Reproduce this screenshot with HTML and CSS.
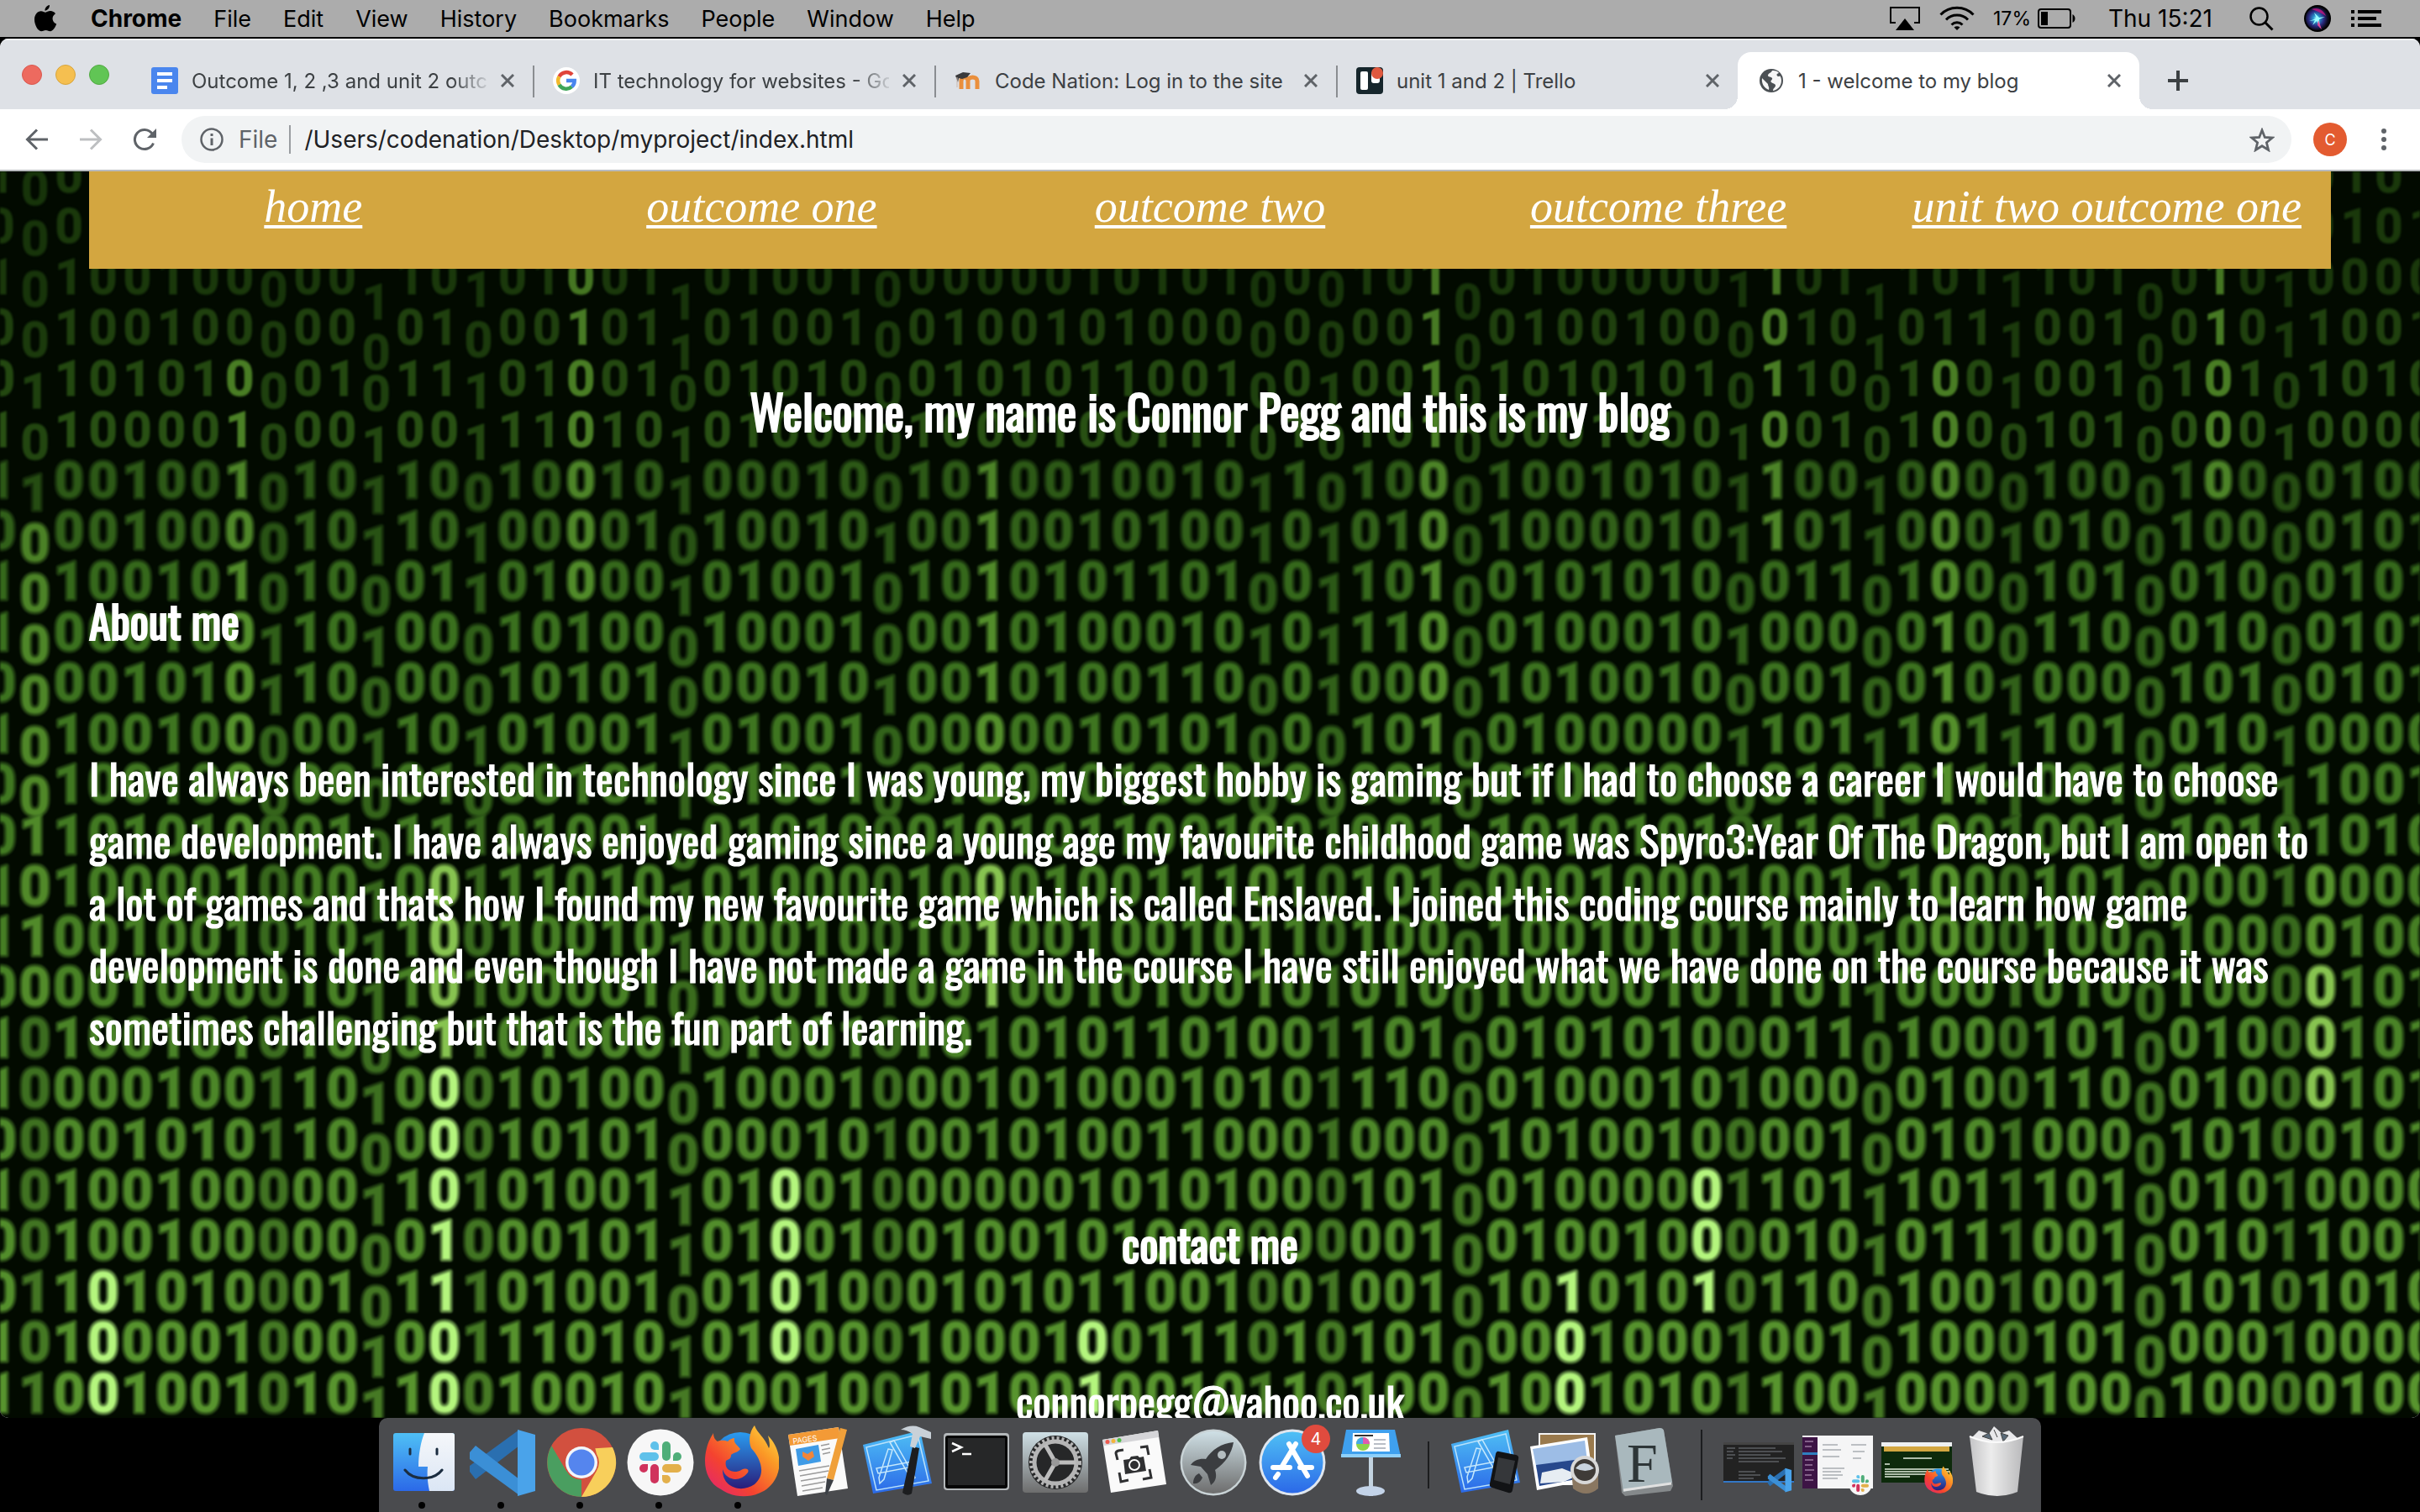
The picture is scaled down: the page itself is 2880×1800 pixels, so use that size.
FILE: index.html
```html
<!DOCTYPE html>
<html lang="en">
<head>
<meta charset="utf-8">
<meta name="viewport" content="width=device-width, initial-scale=1">
<title>1 - welcome to my blog</title>
<link rel="stylesheet" href="styles.css">
</head>
<body>
<header class="menubar">
  <nav class="menus" aria-label="Application menus">
    <button class="menu apple" aria-label="Apple menu"><svg width="28" height="34" viewBox="0 0 28 34"><path d="M19 1c.3 3-2.200 6.500-5.500 6.700C13 4.800 16 1.300 19 1zM14.200 9.700c1.400 0 3.200-1.700 5.800-1.600 2.500.1 4.700 1.200 6 3.200-5.200 3.300-4.200 10.200 1.200 12.300-1.300 3.900-4.300 8.600-7.300 8.600-2 0-2.900-1.300-5.400-1.300s-3.600 1.300-5.400 1.300C5 32.200 1 24.500 1 18.300 1 12 4.800 8.300 8.800 8.200c2.200 0 4 1.500 5.400 1.500z"/></svg></button>
    <button class="menu app">Chrome</button>
    <button class="menu">File</button>
    <button class="menu">Edit</button>
    <button class="menu">View</button>
    <button class="menu">History</button>
    <button class="menu">Bookmarks</button>
    <button class="menu">People</button>
    <button class="menu">Window</button>
    <button class="menu">Help</button>
  </nav>
  <div class="status">
    <svg class="airplay" width="38" height="30" viewBox="0 0 38 30"><path d="M8 20H2V2h34v18h-6" fill="none" stroke="#000" stroke-width="2"/><path d="M19 15l11 14H8z"/></svg>
    <svg class="wifi" width="42" height="30" viewBox="0 0 42 30" fill="none" stroke="#000" stroke-width="3"><path d="M1.500 10.500C12-.5 30-.5 40.500 10.500"/><path d="M8 16.500c7-7.300 19-7.300 26 0"/><path d="M14.500 22.500c3.800-3.600 9.200-3.600 13 0"/><path d="M17.500 25.500c2-1.700 5-1.700 7 0L21 29z" fill="#000" stroke="none"/></svg>
    <span class="percent">17%</span>
    <svg class="battery" width="46" height="24" viewBox="0 0 46 24"><rect x="1" y="1" width="38" height="22" rx="3" fill="none" stroke="#000" stroke-width="2"/><rect x="4" y="4" width="8" height="16"/><path d="M41.500 7c4 2 4 8 0 10z"/></svg>
    <time class="clock">Thu 15:21</time>
    <svg class="search" width="29" height="29" viewBox="0 0 29 29" fill="none" stroke="#000"><circle cx="11.500" cy="11.500" r="10" stroke-width="2.500"/><path d="M18.500 18.500L27.500 27.500" stroke-width="3"/></svg>
    <svg class="siri" width="32" height="32" viewBox="0 0 32 32"><defs><radialGradient id="siri" cx=".45" cy=".5"><stop offset="0" stop-color="#bff"/><stop offset=".25" stop-color="#2a9ad0"/><stop offset=".65" stop-color="#2a2a80"/><stop offset="1" stop-color="#0a0a18"/></radialGradient></defs><circle cx="16" cy="16" r="16"/><circle cx="16" cy="16" r="14" fill="url(#siri)"/><path d="M9 5c8-3 14 1 17 8-4-3-9-5-17-8z" fill="#c4177e" opacity=".8"/><path d="M6 19l9-3-3-7 6 6 7-1-7 3 1 10-4-8-5 5 3-6z" fill="#9ff"/><path d="M17 18l4 11-5-5z" fill="#e04a9a"/></svg>
    <svg class="list" width="36" height="20" viewBox="0 0 36 20"><path d="M0 0h4v4H0zM8 0h28v4H8zM0 8h4v4H0zM8 8h22v4H8zM0 16h4v4H0zM8 16h28v4H8z"/></svg>
  </div>
</header>

<div class="browser">
  <div class="tabstrip">
    <div class="lights"><button class="light red" aria-label="Close window"></button><button class="light amber" aria-label="Minimise window"></button><button class="light green" aria-label="Zoom window"></button></div>
    <div class="tab">
      <svg width="32" height="32" viewBox="0 0 32 32"><rect width="32" height="32" rx="3" fill="#4a86ee"/><path d="M7 6h18v4H7zM7 14h18v4H7zM7 22h12v4H7z" fill="#fff"/></svg>
      <button class="title faded">Outcome 1, 2 ,3 and unit 2 outcome</button>
      <button class="close" aria-label="Close tab"><svg width="16" height="16" viewBox="0 0 16 16"><path d="M1 1l14 14M15 1L1 15"/></svg></button>
    </div>
    <div class="tab">
      <svg width="32" height="32" viewBox="0 0 32 32"><circle cx="16" cy="16" r="16" fill="#fff"/><g fill="none" stroke-width="4.500"><path d="M7.500 11.200A9.700 9.700 0 0 1 23 9" stroke="#e0443a"/><path d="M7.500 20.800a9.700 9.700 0 0 1 0-9.600" stroke="#f2b92c"/><path d="M22.500 23.200a9.700 9.700 0 0 1-15-2.400" stroke="#3fa558"/><path d="M16 16h9.700c0 3.200-1.200 5.600-3.200 7.200" stroke="#4a86ee"/></g></svg>
      <button class="title faded">IT technology for websites - Google</button>
      <button class="close" aria-label="Close tab"><svg width="16" height="16" viewBox="0 0 16 16"><path d="M1 1l14 14M15 1L1 15"/></svg></button>
    </div>
    <div class="tab">
      <svg width="32" height="32" viewBox="0 0 32 32"><path d="M8 26V16.500c0-6 8-6 8 0V26m0-9.500c0-6 11-6 11 0V26" fill="none" stroke="#ea8f3c" stroke-width="5"/><path d="M1 10l9-4 9 1-4 5-6 2-4-1-1 5z" fill="#3a3a3c"/><path d="M3 12v12" stroke="#c9b7ad" stroke-width="1"/></svg>
      <button class="title">Code Nation: Log in to the site</button>
      <button class="close" aria-label="Close tab"><svg width="16" height="16" viewBox="0 0 16 16"><path d="M1 1l14 14M15 1L1 15"/></svg></button>
    </div>
    <div class="tab last">
      <svg width="32" height="32" viewBox="0 0 32 32"><rect width="32" height="32" rx="4" fill="#16262c"/><rect x="5" y="5" width="9" height="22" rx="2" fill="#fff"/><rect x="18" y="5" width="10" height="14" rx="3" fill="#fff"/><circle cx="25" cy="7" r="7" fill="#e0593f"/></svg>
      <button class="title">unit 1 and 2 | Trello</button>
      <button class="close" aria-label="Close tab"><svg width="16" height="16" viewBox="0 0 16 16"><path d="M1 1l14 14M15 1L1 15"/></svg></button>
    </div>
    <div class="tab active">
      <svg width="32" height="32" viewBox="0 0 32 32"><circle cx="16" cy="16" r="14" fill="#4b5054"/><path d="M17 4c-1 3-5 3-5 6 0 2 4 1 5 3s-3 3-1 5 5 1 5 4c0 2-3 3-3 6 6-1 10-6 10-12 0-2-.500-4-1.500-5.500-2 1-4 .5-4-1.500s3-1 2-3c-2-1.500-4-2.300-7.500-2zM5 13l7 7c0 3 2 3 1 7-5-2-9-7-8-14z" fill="#fff" opacity=".95"/></svg>
      <button class="title">1 - welcome to my blog</button>
      <button class="close" aria-label="Close tab"><svg width="16" height="16" viewBox="0 0 16 16"><path d="M1 1l14 14M15 1L1 15"/></svg></button>
    </div>
    <button class="newtab" aria-label="New tab"><svg width="24" height="24" viewBox="0 0 24 24"><path d="M12 0v24M0 12h24" stroke="#3c4043" stroke-width="4"/></svg></button>
  </div>

  <div class="toolbar">
    <button class="tool" aria-label="Back"><svg width="28" height="26" viewBox="0 0 28 26"><path d="M27 13H3M14 1.500L2.500 13 14 24.500" fill="none" stroke="#5f6368" stroke-width="3"/></svg></button>
    <button class="tool" aria-label="Forward"><svg width="28" height="26" viewBox="0 0 28 26"><path d="M1 13h24M14 1.500L25.500 13 14 24.500" fill="none" stroke="#bdbfc1" stroke-width="3"/></svg></button>
    <button class="tool" aria-label="Reload"><svg width="28" height="28" viewBox="0 0 28 28"><path d="M24.500 18.500A11.500 11.500 0 1 1 23 7" fill="none" stroke="#5f6368" stroke-width="3"/><path d="M28 1v11H17z" fill="#5f6368"/></svg></button>
    <div class="omnibox">
      <svg width="28" height="28" viewBox="0 0 28 28"><circle cx="14" cy="14" r="12.500" fill="none" stroke="#5f6368" stroke-width="2.500"/><path d="M12.500 12.500h3V21h-3zM12.500 7h3v3h-3z" fill="#5f6368"/></svg>
      <label class="scheme" for="url">File</label>
      <input class="url" id="url" type="text" value="/Users/codenation/Desktop/myproject/index.html">
      <button class="tool star" aria-label="Bookmark this page"><svg width="30" height="29" viewBox="0 0 30 29"><path d="M15 3l3.300 8.400 9 .6-6.900 5.800 2.200 8.700L15 21.700l-7.600 4.800 2.200-8.700L2.700 12l9-.6z" fill="none" stroke="#5f6368" stroke-width="2.800"/></svg></button>
    </div>
    <button class="avatar" aria-label="Profile">C</button>
    <button class="tool" aria-label="More"><svg width="6" height="28" viewBox="0 0 6 28" fill="#5f6368"><circle cx="3" cy="4" r="3"/><circle cx="3" cy="14" r="3"/><circle cx="3" cy="24" r="3"/></svg></button>
  </div>

  <div class="page">
    <canvas class="rain" aria-hidden="true"></canvas>
    <nav class="sitenav">
      <a href="#home">home</a>
      <a href="#one">outcome one</a>
      <a href="#two">outcome two</a>
      <a href="#three">outcome three</a>
      <a href="#unit-two">unit two outcome one</a>
    </nav>
    <main class="post">
      <h1>Welcome, my name is Connor Pegg and this is my blog</h1>
      <h2>About me</h2>
      <p>I have always been interested in technology since I was young, my biggest hobby is gaming but if I had to choose a career I would have to choose game development. I have always enjoyed gaming since a young age my favourite childhood game was Spyro3:Year Of The Dragon, but I am open to a lot of games and thats how I found my new favourite game which is called Enslaved. I joined this coding course mainly to learn how game development is done and even though I have not made a game in the course I have still enjoyed what we have done on the course because it was sometimes challenging but that is the fun part of learning.</p>
      <h2 class="centre">contact me</h2>
      <p class="centre">connorpegg@yahoo.co.uk</p>
    </main>
  </div>
</div>

<footer class="dockbar">
  <svg class="defs" aria-hidden="true" width="0" height="0">
    <defs>
      <linearGradient id="blue" x2="0" y2="1"><stop offset="0" stop-color="#4fc0f5"/><stop offset="1" stop-color="#2b69e8"/></linearGradient>
      <linearGradient id="pale" x2="0" y2="1"><stop offset="0" stop-color="#f5f7fa"/><stop offset="1" stop-color="#dbe6f5"/></linearGradient>
      <linearGradient id="steel" x2="0" y2="1"><stop offset="0" stop-color="#cfe0e6"/><stop offset="1" stop-color="#6d6d6d"/></linearGradient>
      <linearGradient id="fox" x1="0" y1="1" x2="1" y2="0"><stop offset="0" stop-color="#e0207a"/><stop offset=".35" stop-color="#f4432f"/><stop offset=".7" stop-color="#fb9a26"/><stop offset="1" stop-color="#ffe64a"/></linearGradient>
      <linearGradient id="globe" x2="0" y2="1"><stop offset="0" stop-color="#2a9cf0"/><stop offset="1" stop-color="#2a1b78"/></linearGradient>
      <linearGradient id="bin" x2="1" y2="0"><stop offset="0" stop-color="#c4c4c6"/><stop offset=".4" stop-color="#ececec"/><stop offset="1" stop-color="#b9b9bb"/></linearGradient>
      <symbol id="vscode" viewBox="0 0 94 112"><path d="M8 64l7 9 52-40V14L8 57z" fill="#2a6fb0"/><path d="M8 41l7-8 52 40v19L8 49z" fill="#3b8fd6"/><path d="M65 14l21 6v67l-21 6z" fill="#4aa3ea"/></symbol>
      <symbol id="slackmark" viewBox="0 0 50 50"><path d="M18 0a5 5 0 0 1 5 5v5h-5a5 5 0 0 1 0-10z" fill="#5fc1ea"/><rect y="13" width="23" height="10" rx="5" fill="#5fc1ea"/><rect x="27" width="10" height="23" rx="5" fill="#4fae79"/><path d="M40 23h5a5 5 0 1 0-5-5z" fill="#4fae79"/><rect x="27" y="27" width="23" height="10" rx="5" fill="#e3b04b"/><path d="M27 40v5a5 5 0 1 0 5-5z" fill="#e3b04b"/><rect x="13" y="27" width="10" height="23" rx="5" fill="#d0335c"/><path d="M10 27H5a5 5 0 1 0 5 5z" fill="#d0335c"/></symbol>
      <symbol id="firefox" viewBox="0 0 94 112"><circle cx="48" cy="51" r="34" fill="url(#globe)"/><path d="M8 36c2-8 5-13 8-18 0 5 2 8 5 10 5-2 9-1 12 0 3-3 6-4 8-4-1 6 2 7 7 13-2 4-8 4-11 7 0 5-3 5-6 7-3 12 10 16 18 11 6-3 10-1 8 3-9 12-26 10-30-4-1 22 22 29 38 18 14-12 8-30-4-43-5-12 1-24 4-27 3 9 12 14 17 27 2-3 0-11-1-15 14 14 19 38 6 56-14 19-44 21-62 8C7 76 3 55 8 36z" fill="url(#fox)"/></symbol>
      <symbol id="plan" viewBox="0 0 94 112"><path d="M6 32l68-17 14 63-70 12z" fill="url(#blue)"/><path d="M10 35l61-15 13 55-62 11z" fill="none" stroke="#b9e2fb" stroke-width="1.500"/><path d="M22 60l42-8 2 6-42 8zM38 29l5-2 25 44-4 3zM36 37l5 1-10 35-5 5-1-7z" fill="none" stroke="#c5e8fc" stroke-width="1.500"/></symbol>
    </defs>
  </svg>
  <div class="dock">
    <button class="icon running" aria-label="Finder"><svg viewBox="0 0 94 112"><rect x="11" y="18" width="73" height="69" rx="3" fill="url(#blue)"/><path d="M48 18h33a3 3 0 0 1 3 3v63a3 3 0 0 1-3 3H54c-2-9-3-20-2-29H41c0-15 3-30 7-40z" fill="url(#pale)"/><path d="M31 37v6M63 37v6M25 62c10 13 34 13 44 0" fill="none" stroke="#1b2d40" stroke-width="3" stroke-linecap="round"/></svg></button>
    <button class="icon running" aria-label="Visual Studio Code"><svg viewBox="0 0 94 112"><use href="#vscode"/></svg></button>
    <button class="icon running" aria-label="Google Chrome"><svg viewBox="0 0 94 112"><circle cx="47" cy="53" r="41" fill="#d2503f"/><path d="M11.500 33L29 63a20.500 20.500 0 0 0 18 10.500L47 94A41 41 0 0 1 11.500 33z" fill="#4a9e60"/><path d="M47 94l18-31a20 20 0 0 0 0-20l-2-8h21A41 41 0 0 1 47 94z" fill="#f8cf5b"/><path d="M11.500 33L29 63l6-25 48-3A41 41 0 0 0 11.500 33z" fill="#d2503f"/><circle cx="47" cy="53" r="19" fill="#f3f6fb"/><circle cx="47" cy="53" r="15.500" fill="#5585ee"/></svg></button>
    <button class="icon running" aria-label="Slack"><svg viewBox="0 0 94 112"><circle cx="47" cy="53" r="39.500" fill="#f7f7f7"/><use href="#slackmark" x="22" y="28" width="50" height="50"/></svg></button>
    <button class="icon running" aria-label="Firefox"><svg viewBox="0 0 94 112"><use href="#firefox"/></svg></button>
    <button class="icon" aria-label="Pages"><svg viewBox="0 0 94 112"><path d="M11 20l60-9 11 73-60 9z" fill="#fafafa"/><path d="M11 20l60-9 2 13-60 9z" fill="#f39a36"/><text x="17" y="31" font-family="Inter, sans-serif" font-size="9" fill="#fff" transform="rotate(-8 17 31)">PAGES</text><path d="M20 37l27-5 3 20-27 5z" fill="#3f9be6"/><path d="M28 40l6 3 6-4 2 7-7 5-7-5z" fill="#f0853a"/><path d="M50 33l10-2M51 38l10-2M52 43l9-2M24 63l36-6M25 69l34-6M26 75l30-5M27 81l28-5M28 87l24-4" stroke="#9a9a9a" stroke-width="1.500"/><path d="M73 12l8 2-16 60-8-2z" fill="#f0a03a"/><path d="M57 72l8 2-8 18-2-2z" fill="#3b3f45"/></svg></button>
    <button class="icon" aria-label="Xcode"><svg viewBox="0 0 94 112"><use href="#plan"/><path d="M65 34l8 2-9 54q-5 4-11-1z" fill="#1c1d1f"/><path d="M51 14q12-7 22-3l14 6v8l-13-3-6 14-6-2 3-15q-7-5-14-5z" fill="#c9d1d8"/></svg></button>
    <button class="icon" aria-label="Terminal"><svg viewBox="0 0 94 112"><rect x="8" y="18" width="78" height="68" rx="4" fill="#b4b8ba"/><rect x="10" y="21" width="74" height="63" rx="3" fill="#050505"/><rect x="13" y="24" width="68" height="56" fill="#262728"/><path d="M18 30l11 5-11 5M30 43h11" fill="none" stroke="#fff" stroke-width="2.500"/></svg></button>
    <button class="icon" aria-label="System Preferences"><svg viewBox="0 0 94 112"><rect x="8" y="17" width="78" height="72" rx="4" fill="url(#steel)"/><circle cx="47" cy="53" r="32" fill="#262728"/><circle cx="47" cy="53" r="25" fill="none" stroke="#b5b5b5" stroke-width="5"/><circle cx="47" cy="53" r="29" fill="none" stroke="#b5b5b5" stroke-width="4" stroke-dasharray="3 3"/><path d="M47 53h24M47 53L35 32M47 53L35 74" stroke="#bdbdbd" stroke-width="5"/><circle cx="47" cy="53" r="5" fill="#999"/></svg></button>
    <button class="icon" aria-label="Screenshot"><svg viewBox="0 0 94 112"><path d="M9 26l66-11 10 64-66 10z" fill="#fafafa"/><path d="M9 26l66-11 1 8L11 33z" fill="#d5d5d8"/><circle cx="15" cy="28.500" r="2.500" fill="#ee5b50"/><circle cx="22" cy="27.500" r="2.500" fill="#f3b53a"/><circle cx="29" cy="26.500" r="2.500" fill="#4fbf46"/><path d="M27 50l-2-8q0-2 3-3l6-1M54 35l8-1 2 10M29 65l2 11 9-2M57 73l10-2-2-10" fill="none" stroke="#2f3032" stroke-width="3"/><path d="M34 50l7-1 2-3 8-1 2 2 5-1 3 17-25 4z" fill="#2f3032"/><circle cx="47" cy="56" r="6" fill="none" stroke="#fff" stroke-width="2"/></svg></button>
    <button class="icon" aria-label="Launchpad"><svg viewBox="0 0 94 112"><circle cx="47" cy="53" r="39.500" fill="#c9d3d6"/><circle cx="47" cy="53" r="37" fill="url(#steel)"/><path d="M71 29c-14 1-26 9-33 20-7-1-14 1-18 7l12 2 8 9 4 13c7-5 7-12 5-18 12-8 20-20 22-33zM30 66c-5 2-7 7-7 12 5 1 9-2 11-7z" fill="#3b3d40"/><circle cx="57" cy="44" r="5" fill="#b4bdc0"/></svg></button>
    <button class="icon" aria-label="App Store, 4 updates"><svg viewBox="0 0 94 112"><circle cx="47" cy="53" r="39.500" fill="#dfe6ee"/><circle cx="47" cy="53" r="36.500" fill="url(#blue)"/><path d="M43 31l22 38M51 31L34 59M24 59h20M56 59h14M30 67l-3 4" stroke="#fff" stroke-width="6" stroke-linecap="round"/></svg><span class="badge">4</span></button>
    <button class="icon" aria-label="Keynote"><svg viewBox="0 0 94 112"><path d="M44 45h5v48h-5z" fill="#c3d3e0"/><ellipse cx="46" cy="87" rx="17" ry="6" fill="#c3d3e8"/><path d="M17 14h58l7 32H11z" fill="#3fa0ee"/><path d="M11 43h71v4H11z" fill="#8fd0fa"/><path d="M25 18h43l1 22H24z" fill="#fff"/><path d="M27 21h22" stroke="#333" stroke-width="2"/><circle cx="37" cy="31" r="8" fill="#8bd34a"/><path d="M37 31v-8a8 8 0 0 1 8 8z" fill="#e05ab0"/><path d="M37 31h-8a8 8 0 0 1 8-8z" fill="#46a8e8"/><path d="M50 26h14M50 31h14M50 36h14" stroke="#b9bec6" stroke-width="2"/></svg></button>
    <span class="rule short"></span>
    <button class="icon" aria-label="Simulator"><svg viewBox="0 0 94 112"><use href="#plan" y="-1"/><path d="M63 40l20 4q4 1 3 5l-7 37q-1 4-5 3l-19-6q-4-1-3-5l7-35q1-4 4-3z" fill="#121315"/><path d="M62 47l20 4-6 28-19-5z" fill="#35373a"/></svg></button>
    <button class="icon" aria-label="Preview"><svg viewBox="0 0 94 112"><path d="M16 18h68v62H16z" fill="#f4f4f4"/><path d="M18 20h64v50H18z" fill="#9a7a4d"/><path d="M6 34l68-11 7 50-67 13z" fill="#fff"/><path d="M9 37l62-10 3 25-60 10z" fill="#9dbde6"/><path d="M13 56l61-8 3 22-60 11z" fill="#27488c"/><path d="M20 65l24-5 20 8-18 8-28 2z" fill="#e7edf3"/><path d="M55 62h32v22q-14 12-30 0z" fill="#8a7761"/><circle cx="71" cy="62" r="17" fill="#d8d8d8"/><circle cx="71" cy="62" r="13" fill="#3f3b38"/><path d="M60 60q10-12 22 0-10 6-22 0z" fill="#c9d3de"/></svg></button>
    <button class="icon" aria-label="Font Book"><svg viewBox="0 0 94 112"><path d="M13 21l53-9q4 0 5 3l11 66-3 6-54 6-4-4z" fill="#85898b"/><path d="M13 21l53-9q4 0 5 3l10 62-58 11z" fill="#a9b8bd"/><path d="M23 86l57-8" stroke="#e1e1e1" stroke-width="3"/><text x="27" y="76" font-family="Liberation Serif, serif" font-size="66" fill="#2e3638">F</text></svg></button>
    <span class="rule"></span>
    <button class="icon" aria-label="Code window"><svg viewBox="0 0 94 112"><path d="M4 29h84v48H4z" fill="#222"/><path d="M4 29h84v3H4z" fill="#444"/><path d="M4 75h84v2H4z" fill="#3277c6"/><path d="M8 36h10M8 40h8M8 44h10M8 48h7M22 36h44M22 40h52M22 44h38M22 48h56M22 52h48M22 64h20M22 68h26M22 72h18" stroke="#5c5f63" stroke-width="1.500"/><use href="#vscode" x="54" y="54" width="34" height="42"/></svg></button>
    <button class="icon" aria-label="Slack window"><svg viewBox="0 0 94 112"><path d="M4 21h84v63H4z" fill="#f5f5f6"/><path d="M4 23h18v61H4z" fill="#3d1445"/><path d="M4 41h18v3H4z" fill="#2f7fc0"/><path d="M7 28h10M7 34h8M7 50h10M7 56h9M7 62h11M7 68h8M7 74h10" stroke="#9a7aa0" stroke-width="1.500"/><path d="M28 32h18M28 38h22M28 46h20M28 60h26M28 64h22M28 68h24M28 72h18M62 32h18M64 40h14M64 48h10" stroke="#a9adb3" stroke-width="1.500"/><circle cx="73" cy="78" r="14" fill="#f7f7f7"/><use href="#slackmark" x="63" y="68" width="20" height="20"/></svg></button>
    <button class="icon" aria-label="Firefox window"><svg viewBox="0 0 94 112"><path d="M4 29h84v48H4z" fill="#0d2a0b"/><path d="M4 29h84v5H4z" fill="#eef0f2"/><path d="M7 34h78v6H7z" fill="#d3a640"/><path d="M30 48h34M8 55h6M8 61h76M8 64h78M8 67h72M8 70h30" stroke="#e3eee0" stroke-width="1.500"/><use href="#firefox" x="53" y="54" width="36" height="43"/></svg></button>
    <button class="icon" aria-label="Trash"><svg viewBox="0 0 94 112"><path d="M17 24l9-9 12 4 6-9 9 8 9-3 10 9-8 9H24z" fill="#e8e8ea"/><path d="M30 22l8-4 4 8zM52 18l9 3-6 7zM44 14l4 9" fill="#5a6a78" stroke="#444" stroke-width="1"/><path d="M15 22q32 14 64 0l-7 66q-24 10-49 0z" fill="url(#bin)"/><path d="M15 22q32 14 64 0" fill="none" stroke="#fafafa" stroke-width="2"/></svg></button>
  </div>
</footer>
<script src="rain.js"></script>
</body>
</html>
```
FILE: styles.css
```css
* { box-sizing: border-box; margin: 0; }

html, body { height: 100%; }

body {
  display: flex;
  flex-direction: column;
  overflow: hidden;
  background: #000;
  font-family: Inter, "Liberation Sans", sans-serif;
}

button {
  padding: 0;
  border: 0;
  background: none;
  color: inherit;
  font: inherit;
}

svg { display: block; flex: none; }

/* Menu bar */
.menubar {
  display: flex;
  flex: none;
  align-items: center;
  justify-content: space-between;
  height: 44px;
  margin-bottom: 2px;
  padding: 0 46px 0 40px;
  background: #acacac;
  font-size: 27px;
}
.menus { display: flex; align-items: center; gap: 38px; }
.app { margin-left: 2px; font-size: 28px; font-weight: 700; }
.status { display: flex; align-items: center; }
.wifi { margin-left: 22px; }
.percent { margin-left: 22px; font-size: 23px; }
.battery { margin-left: 8px; }
.clock { margin-left: 38px; font-size: 28px; }
.search { margin-left: 44px; }
.siri { margin-left: 36px; }
.list { margin-left: 24px; }

/* Browser window */
.browser {
  display: flex;
  flex: 1;
  flex-direction: column;
  min-height: 0;
  overflow: hidden;
  border-radius: 10px;
  background: #fff;
}
.tabstrip {
  display: flex;
  flex: none;
  align-items: flex-end;
  height: 84px;
  padding-left: 26px;
  border-top: 2px solid #eff1f3;
  background: #dee1e6;
  color: #3c4043;
  font-size: 24px;
}
.lights { display: flex; gap: 16px; width: 130px; padding-bottom: 29px; }
.light { width: 24px; height: 24px; border: 1px solid; border-radius: 50%; }
.red { border-color: #d9574e; background: #ed6a5f; }
.amber { border-color: #d8a53c; background: #f5bf50; }
.green { border-color: #51a941; background: #61c555; }
.tab {
  position: relative;
  display: flex;
  flex: 0 1 478px;
  align-items: center;
  gap: 16px;
  min-width: 0;
  height: 68px;
  padding: 0 22px 0 24px;
}
.tab::after {
  position: absolute;
  top: 16px;
  right: -2px;
  width: 2px;
  height: 38px;
  background: #8a8d91;
  content: "";
}
.tab.last::after { display: none; }
.title {
  flex: 1;
  min-width: 0;
  overflow: hidden;
  text-align: left;
  white-space: nowrap;
}
.faded { mask-image: linear-gradient(to right, #000 310px, transparent 358px); }
.close svg { fill: none; stroke: #5f6368; stroke-width: 3; }
.active { border-radius: 16px 16px 0 0; background: #fff; }
.active::before, .active::after {
  position: absolute;
  top: auto;
  bottom: 0;
  width: 16px;
  height: 16px;
  content: "";
}
.active::before { left: -16px; background: radial-gradient(circle at 0 0, transparent 16px, #fff 16px); }
.active::after { right: -16px; background: radial-gradient(circle at 100% 0, transparent 16px, #fff 16px); }
.newtab { margin-left: 34px; padding-bottom: 22px; }

.toolbar {
  display: flex;
  flex: none;
  align-items: center;
  gap: 36px;
  height: 74px;
  padding: 0 40px 0 30px;
  border-bottom: 2px solid #b9bbbe;
  background: #fff;
  font-size: 28px;
}
.omnibox {
  display: flex;
  flex: 1;
  align-items: center;
  height: 56px;
  margin: 0 -10px 0 -6px;
  padding: 0 20px 0 22px;
  border-radius: 28px;
  background: #f1f3f4;
}
.scheme {
  margin-left: 18px;
  padding-right: 14px;
  border-right: 2px solid #9a9da1;
  color: #5f6368;
}
.url {
  flex: 1;
  min-width: 0;
  padding: 0 0 0 16px;
  border: 0;
  background: none;
  color: #202124;
  font: inherit;
}
.avatar {
  width: 40px;
  height: 40px;
  margin-right: 5px;
  border-radius: 50%;
  background: #e35b30;
  color: #fff;
  font-size: 18px;
}

/* Blog */
.page {
  position: relative;
  flex: 1;
  min-height: 0;
  overflow: hidden;
  padding: 0 106px;
  background: #020a00;
}
.rain {
  position: absolute;
  inset: 0;
  width: 100%;
  height: 100%;
  filter: blur(1px);
}
.sitenav {
  position: relative;
  display: grid;
  grid-template-columns: repeat(5, 1fr);
  padding: 12px 0 44px;
  background: #d3a640;
  font: italic 54px/60px "Apple Chancery", "Lucida Calligraphy", "Liberation Serif", serif;
  text-align: center;
}
.sitenav a {
  color: #fff;
  text-decoration-thickness: 4px;
  text-decoration-skip-ink: none;
  text-underline-offset: 4px;
}
.post {
  position: relative;
  color: #fff;
  font: 400 50px/74px Oswald, "Liberation Sans", sans-serif;
  -webkit-text-stroke: 1px #fff;
}
.post h1, .post h2 { font-weight: 400; -webkit-text-stroke-width: 2px; }
.post h1 {
  padding-top: 127px;
  font-size: 56px;
  line-height: 83px;
  text-align: center;
}
.post h2 { margin-top: 172px; font-size: 52px; }
.post p { margin-top: 112px; }
.post h2.centre { margin-top: 186px; }
.centre { text-align: center; }

/* Dock */
.dockbar { flex: none; display: flex; justify-content: center; }
.defs { position: absolute; }
.dock {
  display: flex;
  padding: 0 6px;
  border-radius: 10px 10px 0 0;
  background: #4a4b4e;
}
.icon { position: relative; width: 94px; height: 112px; }
.icon > svg { width: 94px; height: 112px; }
.running::after {
  position: absolute;
  bottom: 4px;
  left: 41px;
  width: 8px;
  height: 8px;
  border-radius: 50%;
  background: #000;
  content: "";
}
.badge {
  position: absolute;
  top: 8px;
  right: 2px;
  width: 34px;
  border-radius: 50%;
  background: #e04b3e;
  color: #fff;
  font-size: 20px;
  line-height: 34px;
}
.rule { width: 2px; margin: 14px 21px; background: #1c1d1f; }
.short { margin: 28px 20px; }
```
FILE: rain.js
```js
// Falling binary digits behind the blog post. The pattern repeats every nine rows.
const rows = [
  '001001000000010001011010010010010100000000100100100001010111001001011001',
  '011010100010111010010010100010101100100100101010101011001001001010101010',
  '101000010001001110101010000100010011101010100001000100101000101000010000',
  '110010010101100100101000100101001001011010001001010110010000100010000100',
  '000010000101101000010100101001001010010101001000010110110001010010000101',
  '101001010100011010001010010101010110100110100101010001101000101001000101',
  '100001001101000101000100010001010001010111000100010100000100110001000101',
  '000010101100000101010000101001010011000100001010010000100101000010100101',
  '101001000001101010011010010000001010100010100100000110111011101001010000'
];
const pitchX = 40.6;
const pitchY = 60.4;
const firstRow = -3;

// Columns that hang lower than their neighbours all the way down, and in the upper half only.
const low = new Set([11, 20, 43, 55, 63]);
const lowAbove = new Set([1, 8, 14, 26, 37, 39, 51, 59, 67]);

// Bright streaks: column, first row, last row, strength.
const streaks = [
  [7, 1, 11, 1], [17, -3, 5, 1], [1, 4, 13, 1], [29, 3, 10, 1], [29, 11, 13, 2], [42, -3, 8, 1],
  [37, 10, 17, 1], [52, -3, 4, 1], [57, 1, 12, 1], [65, -3, 3, 1],
  [13, 11, 14, 2], [13, 15, 21, 3], [3, 19, 21, 3], [23, 17, 20, 3],
  [32, 20, 21, 3], [46, 19, 21, 3], [50, 17, 19, 3], [68, 11, 12, 1], [68, 13, 15, 2]
];

function mix(a, b, t) {
  return a.map((v, i) => Math.round(v + (b[i] - v) * t));
}

function tone(col, row) {
  let c = row < 6
    ? mix([26, 56, 11], [58, 112, 30], Math.max(0, row + 1) / 7)
    : mix([58, 112, 30], [88, 148, 46], (row - 6) / 15);
  if (low.has(col) || lowAbove.has(col)) c = mix(c, [14, 40, 6], 0.25);
  for (const [k, from, to, level] of streaks) {
    if (k === col && row >= from && row <= to) {
      c = level === 3 ? [180, 245, 125] : level === 2 ? [135, 195, 80] : mix(c, [98, 160, 50], 0.6);
    }
  }
  return c;
}

function draw() {
  const canvas = document.querySelector('.rain');
  const w = canvas.width = canvas.clientWidth;
  const h = canvas.height = canvas.clientHeight;
  const ctx = canvas.getContext('2d');
  ctx.textAlign = 'center';
  ctx.lineJoin = 'round';
  for (let r = 0; r * pitchY < h + pitchY; r++) {
    const row = r + firstRow;
    const digits = rows[(row + 9) % 9];
    const size = Math.min(64, 58 + Math.round(r * 0.4));
    ctx.font = `bold ${size}px Roboto, "Liberation Sans", sans-serif`;
    ctx.lineWidth = row < 3 ? 2 : 6;
    for (let col = 0; col * pitchX < w + pitchX; col++) {
      const x = col * pitchX + 1;
      let y = 4 + r * pitchY + size * 0.36;
      if (low.has(col)) y += row < 1 ? 30 : 18;
      if (lowAbove.has(col) && row < 10) y += 15;
      const c = tone(col, row);
      const digit = digits[col % digits.length];
      ctx.strokeStyle = `rgba(${c}, 0.5)`;
      ctx.strokeText(digit, x, y);
      ctx.fillStyle = `rgb(${c})`;
      ctx.fillText(digit, x, y);
    }
  }
}

draw();
addEventListener('resize', draw);
```
